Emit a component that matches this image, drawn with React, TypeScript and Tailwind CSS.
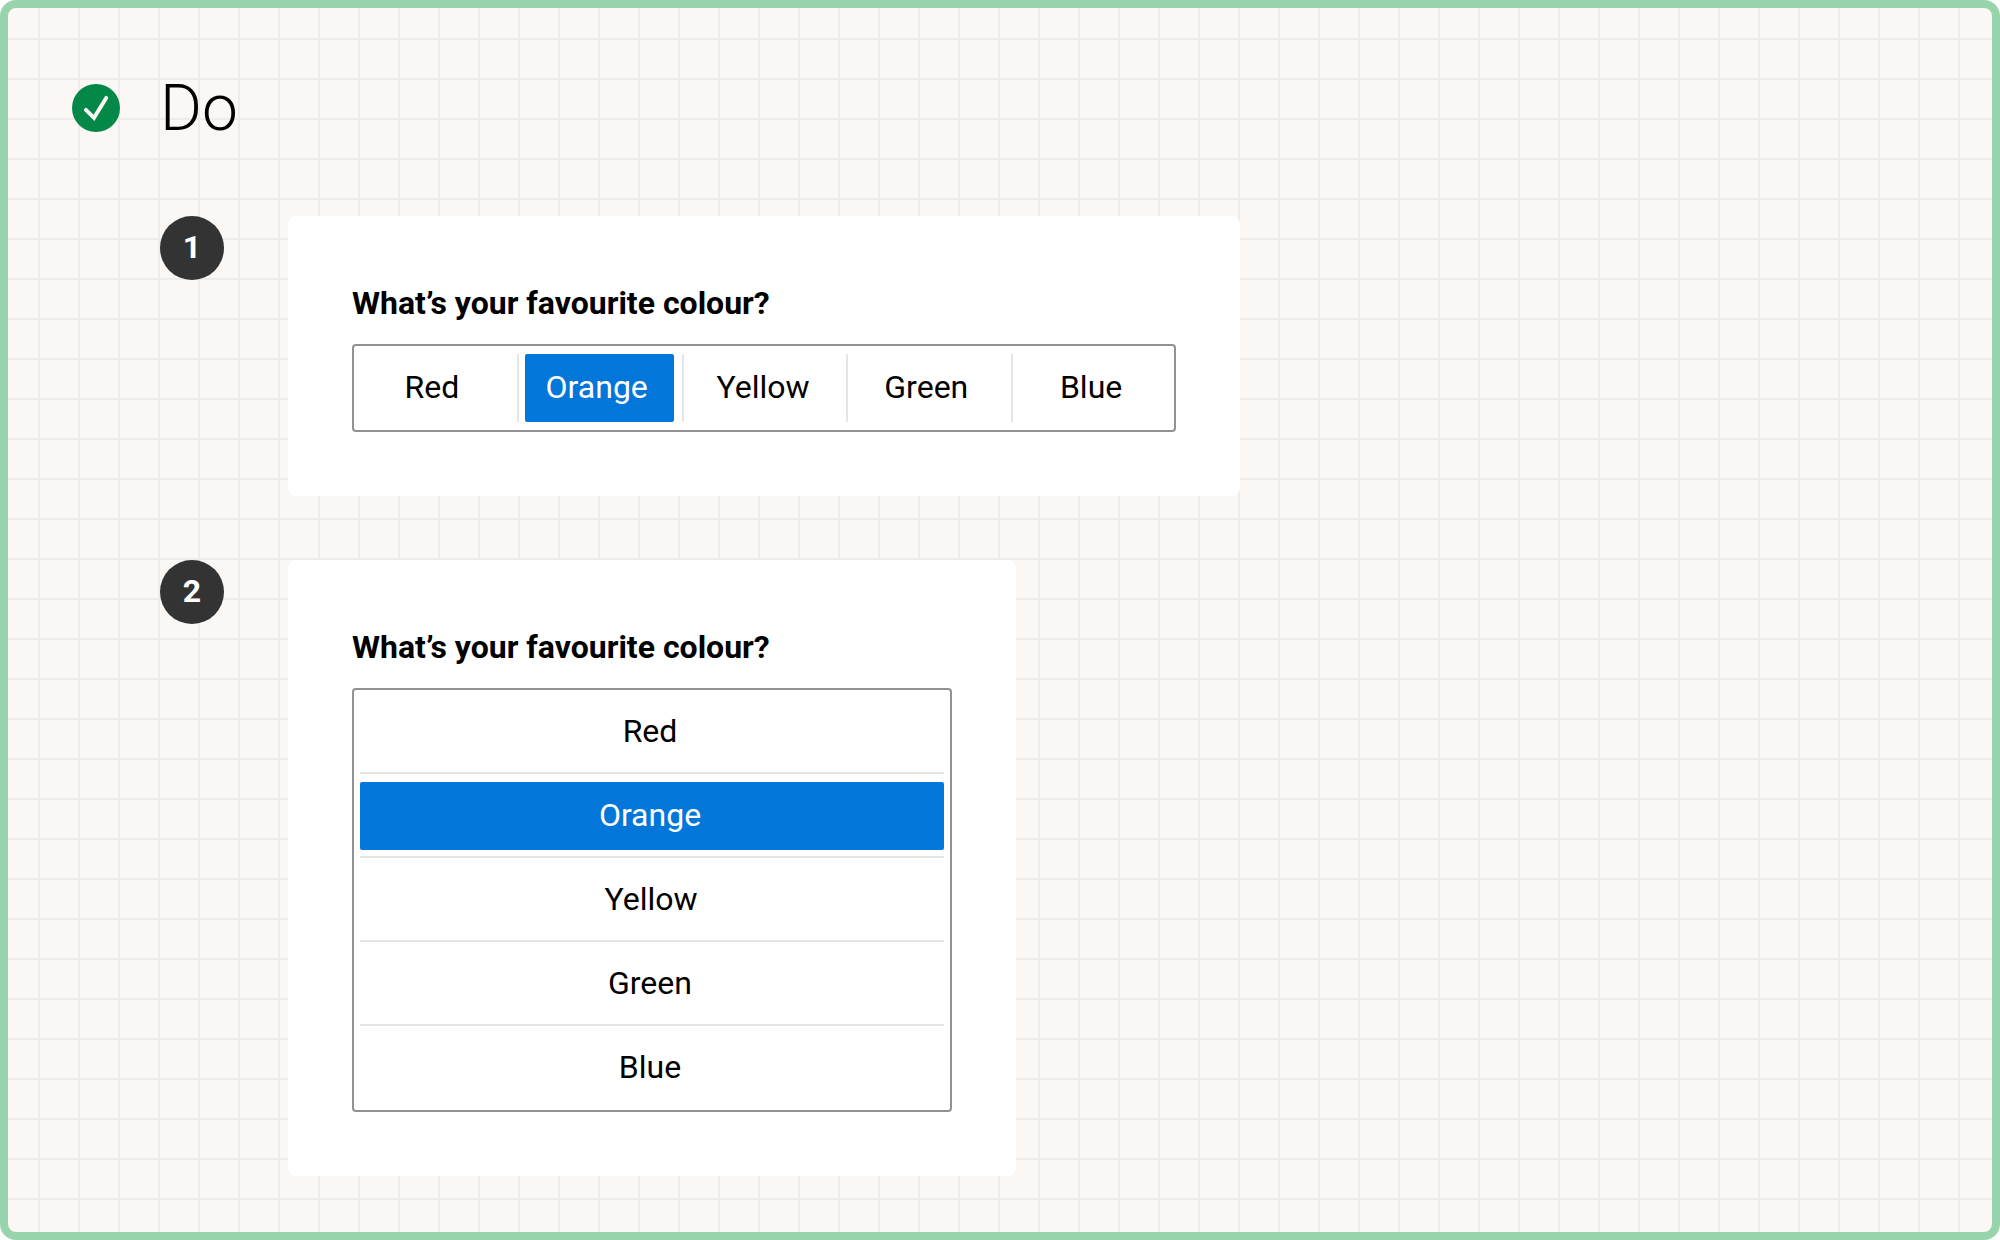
import clsx from 'clsx';

const COLOURS = ['Red', 'Orange', 'Yellow', 'Green', 'Blue'];
const SELECTED = 'Orange';

function CheckIcon() {
  return (
    <svg className="size-12 shrink-0" viewBox="0 0 48 48" fill="none">
      <circle cx="24" cy="24" r="24" fill="#048848" />
      <path d="M13.9 25.8L22 33.8L34.2 13.9" stroke="#fbf7f4" strokeWidth="3.9" strokeLinecap="round" />
    </svg>
  );
}

function OptionLabel({ colour, vertical }: { colour: string; vertical?: boolean }) {
  return (
    <div
      className={clsx(
        'flex h-[68px] flex-1 items-center justify-center pb-0.5',
        colour === SELECTED && 'rounded-[2px] bg-[#0276d9] text-white',
        colour === 'Yellow' ? 'pr-0.5' : vertical ? 'pr-1' : 'pr-[5px]',
      )}
    >
      {colour}
    </div>
  );
}

function Example({ step, vertical }: { step: number; vertical?: boolean }) {
  return (
    <section className="flex items-start gap-16">
      <div className="flex size-16 items-center justify-center rounded-full bg-[#333333] pb-0.5 text-[32px] leading-none font-bold text-white">
        {step}
      </div>
      <div className="rounded-lg bg-white p-16">
        <h2 className="mb-[18px] text-[32px] leading-[46px] font-bold">What’s your favourite colour?</h2>
        {vertical ? (
          <ul className="w-[600px] rounded-[4px] border-2 border-[#929292] px-1.5">
            {COLOURS.map((colour, i) => (
              <li key={colour} className="flex h-[84px] flex-col pt-2">
                <div className="flex h-[68px]">
                  <OptionLabel colour={colour} vertical />
                </div>
                <span className="h-1.5" />
                {i < COLOURS.length - 1 && <span className="h-0.5 bg-[#e5e5e5]" />}
              </li>
            ))}
          </ul>
        ) : (
          <ul className="flex h-[88px] w-[824px] rounded-[4px] py-2.5 shadow-[inset_0_0_0_2px_#929292]">
            {COLOURS.map((colour, i) => (
              <li key={colour} className="flex flex-1 pr-2">
                <span className={clsx('w-0.5', i > 0 && 'bg-[#e5e5e5]')} />
                <span className="w-1.5" />
                <OptionLabel colour={colour} />
              </li>
            ))}
          </ul>
        )}
      </div>
    </section>
  );
}

export default function App() {
  return (
    <div className="h-[1240px] w-[2000px] bg-white font-['Roboto',sans-serif] text-[32px] text-black">
      <main className="h-full rounded-2xl border-8 border-[#98d4ab] bg-[#fbf7f4] bg-[linear-gradient(to_right,#eeebe8_2px,transparent_2px),linear-gradient(to_bottom,#eeebe8_2px,transparent_2px)] bg-[size:40px_40px] bg-[position:30px_30px] pl-16">
        <header className="flex h-[208px] items-center gap-10 pb-2">
          <CheckIcon />
          <h1 className="pt-0.5 text-[64px] leading-none font-light">Do</h1>
        </header>
        <div className="flex flex-col gap-16 pl-[88px]">
          <Example step={1} />
          <Example step={2} vertical />
        </div>
      </main>
    </div>
  );
}
